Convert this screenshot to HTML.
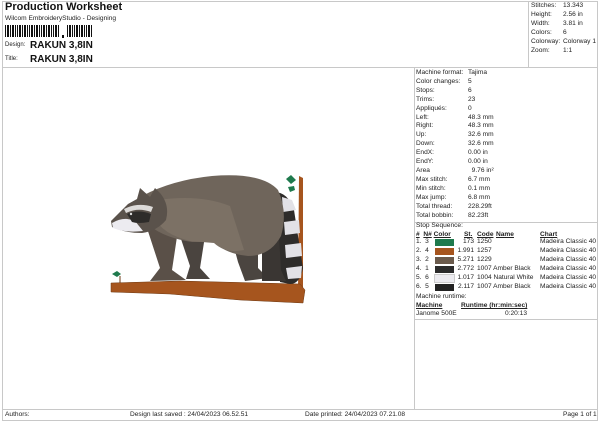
<!DOCTYPE html>
<html><head><meta charset="utf-8"><style>
*{margin:0;padding:0;box-sizing:border-box}
body{width:600px;height:424px;background:#fff;font-family:"Liberation Sans",sans-serif;color:#222;position:relative;overflow:hidden}
.a{position:absolute;white-space:nowrap}
.l{position:absolute;background:#c8c8c8}
.s{font-size:6.6px;line-height:8.9px}
.u{text-decoration:underline;font-weight:bold}
.sw{position:absolute;width:19px;height:7px}
</style></head><body>
<div class="l" style="left:2px;top:1px;width:1px;height:420px"></div>
<div class="l" style="left:597px;top:1px;width:1px;height:420px"></div>
<div class="l" style="left:2px;top:1px;width:596px;height:1px"></div>
<div class="l" style="left:2px;top:420px;width:596px;height:1px"></div>
<div class="l" style="left:2px;top:67px;width:596px;height:1px"></div>
<div class="l" style="left:528px;top:1px;width:1px;height:66px"></div>
<div class="l" style="left:414px;top:67px;width:1px;height:342px"></div>
<div class="l" style="left:414px;top:222px;width:184px;height:1px"></div>
<div class="l" style="left:414px;top:319px;width:184px;height:1px"></div>
<div class="l" style="left:2px;top:409px;width:596px;height:1px"></div>

<div class="a" style="left:5px;top:1px;font-size:11px;font-weight:bold;color:#111">Production Worksheet</div>
<div class="a" style="left:5px;top:15px;font-size:6.6px">Wilcom EmbroideryStudio - Designing</div>
<svg class="a" style="left:5px;top:25px" width="90" height="14">
<g fill="#111">
<rect x="0" y="0" width="1" height="12"/><rect x="2" y="0" width="2" height="12"/><rect x="5" y="0" width="1" height="12"/><rect x="7" y="0" width="2" height="12"/><rect x="10" y="0" width="1" height="12"/><rect x="12" y="0" width="1" height="12"/><rect x="14" y="0" width="2" height="12"/><rect x="17" y="0" width="1" height="12"/><rect x="19" y="0" width="2" height="12"/><rect x="22" y="0" width="1" height="12"/><rect x="24" y="0" width="1" height="12"/><rect x="26" y="0" width="2" height="12"/><rect x="29" y="0" width="1" height="12"/><rect x="31" y="0" width="2" height="12"/><rect x="34" y="0" width="1" height="12"/><rect x="36" y="0" width="1" height="12"/><rect x="38" y="0" width="2" height="12"/><rect x="41" y="0" width="1" height="12"/><rect x="43" y="0" width="2" height="12"/><rect x="46" y="0" width="1" height="12"/><rect x="48" y="0" width="1" height="12"/><rect x="50" y="0" width="2" height="12"/><rect x="53" y="0" width="1" height="12"/>
<rect x="57" y="10" width="2" height="3"/>
<rect x="62" y="0" width="1" height="12"/><rect x="64" y="0" width="2" height="12"/><rect x="67" y="0" width="1" height="12"/><rect x="69" y="0" width="1" height="12"/><rect x="71" y="0" width="2" height="12"/><rect x="74" y="0" width="1" height="12"/><rect x="76" y="0" width="2" height="12"/><rect x="79" y="0" width="1" height="12"/><rect x="81" y="0" width="1" height="12"/><rect x="83" y="0" width="2" height="12"/><rect x="86" y="0" width="1" height="12"/></g></svg>
<div class="a" style="left:5px;top:42px;font-size:6px">Design:</div>
<div class="a" style="left:30px;top:40px;font-size:10px;font-weight:bold;color:#111">RAKUN 3,8IN</div>
<div class="a" style="left:5px;top:56px;font-size:6px">Title:</div>
<div class="a" style="left:30px;top:54px;font-size:10px;font-weight:bold;color:#111">RAKUN 3,8IN</div>

<div class="a s" style="left:531px;top:2px">Stitches:<br>Height:<br>Width:<br>Colors:<br>Colorway:<br>Zoom:</div>
<div class="a s" style="left:563px;top:2px">13.343<br>2.56 in<br>3.81 in<br>6<br>Colorway 1<br>1:1</div>

<div class="a s" style="left:416px;top:69px">Machine format:<br>Color changes:<br>Stops:<br>Trims:<br>Appliqués:<br>Left:<br>Right:<br>Up:<br>Down:<br>EndX:<br>EndY:<br>Area<br>Max stitch:<br>Min stitch:<br>Max jump:<br>Total thread:<br>Total bobbin:</div>
<div class="a s" style="left:468px;top:69px">Tajima<br>5<br>6<br>23<br>0<br>48.3 mm<br>48.3 mm<br>32.6 mm<br>32.6 mm<br>0.00 in<br>0.00 in<br>&nbsp;&nbsp;9.76 in²<br>6.7 mm<br>0.1 mm<br>6.8 mm<br>228.29ft<br>82.23ft</div>

<div class="a s" style="left:416px;top:222px">Stop Sequence:</div>
<div class="a s" style="left:416px;top:231px"><span class="u">#</span>&nbsp;&nbsp;<span class="u">N#</span> <span class="u">Color</span></div>
<div class="a s u" style="left:464px;top:231px">St.</div>
<div class="a s u" style="left:477px;top:231px">Code</div>
<div class="a s u" style="left:496px;top:231px">Name</div>
<div class="a s u" style="left:540px;top:231px">Chart</div>
<div class="a s" style="left:416px;top:238px">1.&nbsp; 3<br>2.&nbsp; 4<br>3.&nbsp; 2<br>4.&nbsp; 1<br>5.&nbsp; 6<br>6.&nbsp; 5</div>
<div class="sw" style="left:435px;top:239px;background:#1f7a4d"></div>
<div class="sw" style="left:435px;top:248px;background:#a6551e"></div>
<div class="sw" style="left:435px;top:257px;background:#6a5a4c"></div>
<div class="sw" style="left:435px;top:266px;background:#2b2b2b"></div>
<div class="sw" style="left:435px;top:275px;background:#ecebf0;outline:1px solid #ccc"></div>
<div class="sw" style="left:435px;top:284px;background:#222"></div>
<div class="a s" style="left:455px;top:238px;width:19px;text-align:right">173<br>1.991<br>5.271<br>2.772<br>1.017<br>2.117</div>
<div class="a s" style="left:477px;top:238px">1250<br>1257<br>1229<br>1007 Amber Black<br>1004 Natural White<br>1007 Amber Black</div>
<div class="a s" style="left:540px;top:238px">Madeira Classic 40<br>Madeira Classic 40<br>Madeira Classic 40<br>Madeira Classic 40<br>Madeira Classic 40<br>Madeira Classic 40</div>
<div class="a s" style="left:416px;top:293px">Machine runtime:</div>
<div class="a s u" style="left:416px;top:302px">Machine</div>
<div class="a s u" style="left:461px;top:302px">Runtime (hr:min:sec)</div>
<div class="a s" style="left:416px;top:310px">Janome 500E</div>
<div class="a s" style="left:505px;top:310px">0:20:13</div>

<div class="a s" style="left:5px;top:411px">Authors:</div>
<div class="a s" style="left:130px;top:411px">Design last saved : 24/04/2023 06.52.51</div>
<div class="a s" style="left:305px;top:411px">Date printed: 24/04/2023 07.21.08</div>
<div class="a s" style="left:563px;top:411px">Page 1 of 1</div>

<svg class="a" style="left:100px;top:170px" width="210" height="140" viewBox="100 170 210 140">
<!-- stick -->
<path d="M299 176 L303 178 L303 292 L298 292Z" fill="#a6551e"/>
<path d="M296 180 l-5 -5 l-5 4 l5 5z M294 186 l-6 1 l2 5 l5 -2z" fill="#1f7a4d"/>
<!-- branch -->
<path d="M111 283 L180 281 L300 284 L305 290 L303 303 L240 300 L170 294 L111 292Z" fill="#a6551e" stroke="#6e3a14" stroke-width=".5"/>
<path d="M112 274 l5-3 l4 3 l-4 3z" fill="#1f7a4d"/><path d="M120 276 v7" stroke="#6e3a14"/>
<!-- tail -->
<path d="M274 192 Q288 192 294 210 L303 268 Q300 284 290 284 L280 282 L277 232Z" fill="#2e2c2a"/>
<path d="M282 197 L292 200 L296 210 L283 212Z M284 222 L299 220 L300 233 L285 235Z M285 245 L301 243 L302 256 L286 258Z M286 268 L302 266 L301 278 L288 279Z" fill="#e2e1e6"/>
<!-- back legs -->
<path d="M228 225 L258 235 L258 268 L268 278 L245 281 L238 262Z" fill="#4b4540"/>
<path d="M252 218 L278 218 L281 270 L286 281 L262 281 L262 250Z" fill="#3a3633"/>
<!-- front legs -->
<path d="M145 222 L178 230 L172 270 L186 280 L150 281 L160 268Z" fill="#5a5048"/>
<path d="M178 230 L205 236 L200 268 L210 279 L186 279 L190 266Z" fill="#4a443f"/>
<!-- body -->
<path d="M142 196 Q172 180 212 176 Q262 172 278 190 Q288 212 281 236 Q270 256 248 256 Q226 254 214 242 L192 242 Q165 238 150 226Z" fill="#6f655b"/>
<path d="M158 200 Q200 194 230 206 L244 250 Q226 254 214 243 L190 241 Q162 234 155 218Z" fill="#7c7165"/>
<!-- head -->
<path d="M150 197 L140 188 L137 199 L128 204 Q118 214 111 221 L112 227 Q125 233 142 233 Q157 231 166 220 Q170 205 160 193 L155 188Z" fill="#5a524b"/>
<path d="M112 223 Q124 216 135 221 L143 231 Q125 233 113 228Z" fill="#ecebf0"/>
<path d="M124 209 Q138 202 153 207 L151 212 Q138 207 126 213Z" fill="#dcdad8"/>
<path d="M127 214 Q138 209 151 214 L149 222 Q138 224 132 222Z" fill="#2e2c2a"/>
<circle cx="131" cy="214" r="1.2" fill="#ddd"/>
</svg>
</body></html>
